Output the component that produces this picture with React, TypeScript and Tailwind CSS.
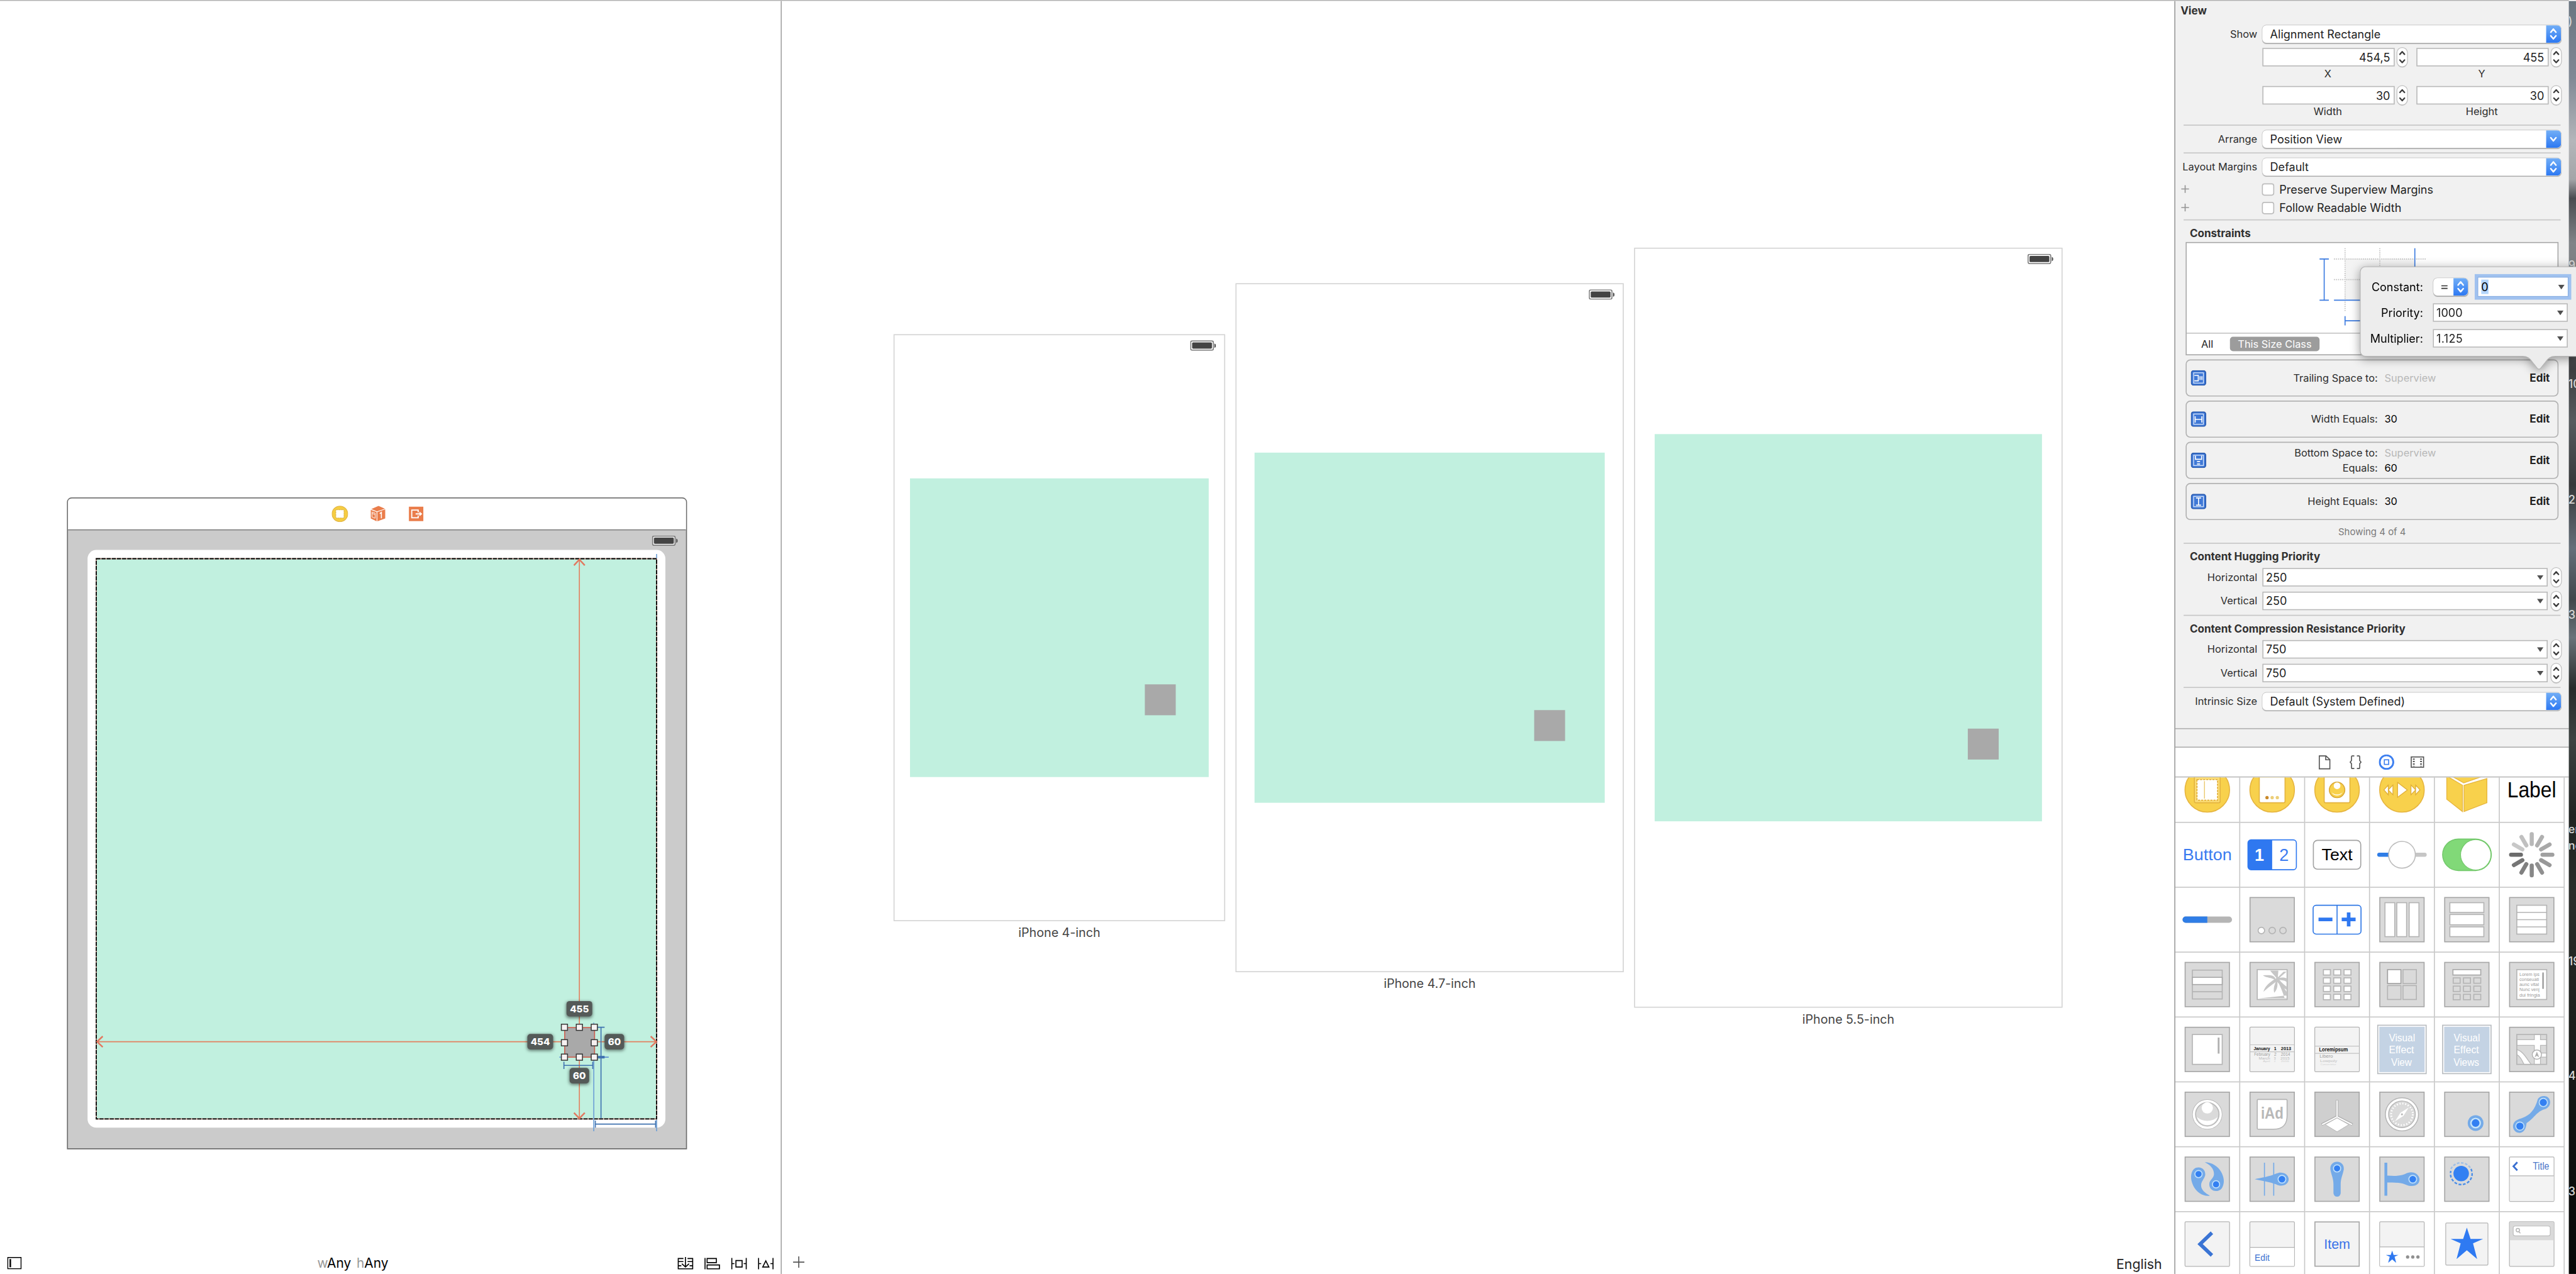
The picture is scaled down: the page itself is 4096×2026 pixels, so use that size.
import React from "react";

/* ---------- shared form controls ---------- */

function Chevrons({ single = false }: { single?: boolean }) {
  return (
    <svg viewBox="0 0 28 34" className="h-full w-[28px]" fill="none" stroke="#fff" strokeWidth="3" strokeLinecap="round" strokeLinejoin="round">
      {single ? (
        <path d="M9 14.5l5 6 5-6" />
      ) : (
        <>
          <path d="M9 13.5l5-6 5 6" />
          <path d="M9 20.5l5 6 5-6" />
        </>
      )}
    </svg>
  );
}

function Select({ text, single = false }: { text: string; single?: boolean }) {
  return (
    <div className="flex h-[34px] w-[580px] items-stretch overflow-hidden rounded-[8px] bg-white shadow-[0_0_0_1px_#c9c9c9,0_2px_1px_#a8a8a8]">
      <div className="flex flex-1 items-center pl-[15px] text-[22px] text-[#222]">{text}</div>
      <div className="w-[29px] bg-gradient-to-b from-[#72aef6] to-[#2c78f2]">
        <Chevrons single={single} />
      </div>
    </div>
  );
}

function Stepper() {
  return (
    <div className="h-[36px] w-[19px] rounded-full bg-white shadow-[0_0_0_1.5px_#c0c0c0,0_2px_1px_#b0b0b0]">
      <svg viewBox="0 0 19 36" className="h-full w-full" fill="none" stroke="#3c3c3c" strokeWidth="2.8" strokeLinecap="round" strokeLinejoin="round">
        <path d="M5 12.5l4.5-5 4.5 5" />
        <path d="M5 23.5l4.5 5 4.5-5" />
      </svg>
    </div>
  );
}

function Triangle() {
  return (
    <svg viewBox="0 0 14 10" className="h-[9px] w-[13px]">
      <path d="M0 0h14l-7 10z" fill="#505050" />
    </svg>
  );
}

function Row({ label, className = "", children }: { label: string; className?: string; children: React.ReactNode }) {
  return (
    <div className={"flex items-center gap-[10px] " + className}>
      <div className="w-[159px] whitespace-nowrap text-right text-[20px] text-[#2c2c2c]">{label}</div>
      {children}
    </div>
  );
}

function NumberPair({ a, b, la, lb, className }: { a: string; b: string; la: string; lb: string; className: string }) {
  return (
    <div className={"ml-[169px] flex w-[580px] justify-between " + className}>
      {[
        [a, la],
        [b, lb],
      ].map(([v, l]) => (
        <div key={l} className="flex w-[281px] flex-col">
          <div className="flex justify-between">
            <div className="flex h-[36px] w-[257px] items-center justify-end border-2 border-[#b9b9b9] bg-white pr-[7px] pt-[1px] text-[22px] text-[#222]">{v}</div>
            <Stepper />
          </div>
          <div className="mt-[2px] flex h-[24px] w-[254px] items-center justify-center text-[20px] text-[#2c2c2c]">{l}</div>
        </div>
      ))}
    </div>
  );
}

function PriorityField({ label, value, className }: { label: string; value: string; className: string }) {
  return (
    <Row label={label} className={className}>
      <div className="flex w-[580px] justify-between">
        <div className="flex h-[36px] w-[554px] items-center justify-between border-2 border-[#b9b9b9] bg-white pr-[6px] pl-[5px] text-[22px] text-[#222]">
          {value}
          <Triangle />
        </div>
        <Stepper />
      </div>
    </Row>
  );
}

function Divider({ className }: { className: string }) {
  return <div className={"ml-[16px] h-[2px] w-[732px] bg-[#c6c6c6] " + className} />;
}

function Heading({ children, className }: { children: string; className: string }) {
  return <div className={"ml-[28px] flex h-[24px] items-center text-[20.8px] font-bold text-[#303030] " + className}>{children}</div>;
}

function Check({ label, className }: { label: string; className: string }) {
  return (
    <div className={"flex h-[24px] items-center " + className}>
      <svg viewBox="0 0 16 16" className="mb-[2px] ml-[11px] h-[16px] w-[16px]" stroke="#959595" strokeWidth="2">
        <path d="M8 0.500v15M0.500 8h15" />
      </svg>
      <div className="ml-[141px] h-[24px] w-[24px] rounded-[5px] border-2 border-[#bdbdbd] bg-white" />
      <div className="ml-[10px] text-[22px] text-[#222]">{label}</div>
    </div>
  );
}

/* ---------- constraints ---------- */

const constraintIcons: Record<string, React.ReactNode> = {
  trailing: <path d="M7 10h7.500v10.500H7M18 11.500v7.500M21.500 11.500v7.500" />,
  width: <path d="M8.500 9.500v12M21.500 9.500v12M8.500 15.500h13" />,
  bottom: <path d="M9 6v7h12V6M12 17.500h6M12 22h6" />,
  height: <path d="M10 8h10M10 22h10M15 8v14" />,
};

function ConstraintRow({ icon, lines }: { icon: string; lines: [string, string, boolean][] }) {
  return (
    <div className="flex h-[72px] w-[724px] items-center rounded-[9px] border-2 border-[#b2b2b2] bg-[#f1f1f1]">
      <svg viewBox="0 0 30 30" className="ml-[8px] h-[30px] w-[30px]" fill="none" stroke="#fff" strokeWidth="2">
        <rect x="1" y="1" width="28" height="28" rx="4.500" fill="#3f78d6" stroke="#2c5db0" />
        <rect x="5.500" y="5" width="19" height="20" stroke="#dbe8fb" strokeWidth="1.600" />
        {constraintIcons[icon]}
      </svg>
      <div className="flex flex-col">
        {lines.map(([l, v, dim]) => (
          <div key={l} className="flex h-[30px] items-center text-[20px]">
            <div className="w-[333px] text-right text-[#2c2c2c]">{l}</div>
            <div className={"ml-[13px] w-[140px] " + (dim ? "text-[#b8b8b8]" : "text-black")}>{v}</div>
          </div>
        ))}
      </div>
      <div className="mr-[15px] ml-auto text-[20.8px] font-bold text-[#222]">Edit</div>
    </div>
  );
}

function ConstraintsDiagram() {
  return (
    <div className="mt-[5px] ml-[20px] flex h-[220px] w-[724px] flex-col border-2 border-[#a8a8a8] bg-white">
      <svg viewBox="4246 472 720 174" className="h-[174px] w-[720px]" fill="none">
        <rect x="4554" y="503" width="135" height="80" fill="#f3f3f3" />
        <path d="M4553.500 482V604M4621 482V604M4532 503H4710M4532 543H4710" stroke="#bdbdbd" strokeWidth="2" strokeDasharray="2 2" />
        <path d="M4513 503V583M4504 503H4522M4504 583H4522M4689 482V604M4532 583H4710M4553.500 614V632M4553.500 623H4689" stroke="#3a7ae0" strokeWidth="2" />
      </svg>
      <div className="flex flex-1 items-center border-t-2 border-[#c4c4c4] text-[20px]">
        <div className="ml-[28px] w-[24px] text-[#222]">All</div>
        <div className="ml-[32px] flex h-[28px] w-[174px] items-center justify-center rounded-[6px] bg-[#9c9c9c] whitespace-nowrap text-white">This Size Class</div>
      </div>
    </div>
  );
}

function Popover() {
  const field = "flex h-[36px] w-[262px] items-center justify-between border-2 border-[#b9b9b9] bg-white pl-[5px] pr-[6px] text-[22px] text-[#222]";
  return (
    <div className="absolute top-[517px] left-[4582px] h-[202px] w-[420px] drop-shadow-[0_4px_10px_rgba(0,0,0,0.4)]">
      <svg viewBox="0 0 420 202" className="absolute inset-0 h-full w-full">
        <path d="M430 1H11a10 10 0 0 0-10 10V165a10 10 0 0 0 10 10H316C328 175 331 181 335 186L345 198.500Q348 201 351 198.500L361 186C365 181 368 175 380 175H430Z" fill="#ededed" stroke="#b4b4b4" strokeWidth="1.500" />
      </svg>
      <div className="relative flex flex-col gap-[14px] pt-[22px]">
        <div className="flex h-[36px] items-center">
          <div className="w-[123px] text-right text-[22px] text-black">Constant:</div>
          <div className="ml-[20px] flex h-[34px] w-[67px] overflow-hidden rounded-[8px] bg-white shadow-[0_0_0_1px_#c4c4c4,0_2px_1px_#a8a8a8]">
            <svg viewBox="0 0 39 34" className="h-full w-[39px]" stroke="#333" strokeWidth="2">
              <path d="M15.500 15H27.500M15.500 20H27.500" />
            </svg>
            <div className="w-[28px] bg-gradient-to-b from-[#72aef6] to-[#2c78f2]">
              <Chevrons />
            </div>
          </div>
          <div className="ml-[20px] flex h-[36px] w-[174px] items-center justify-between bg-white px-[6px] text-[22px] text-black shadow-[0_0_0_7px_#a0c1ef] ring-1 ring-[#7ba4dc]">
            <span className="bg-[#b3d5fc] leading-[28px]">0</span>
            <Triangle />
          </div>
        </div>
        <div className="flex items-center">
          <div className="w-[123px] text-right text-[22px] text-black">Priority:</div>
          <div className="ml-[19px] flex">
            <div className={field}>
              1000
              <Triangle />
            </div>
          </div>
        </div>
        <div className="flex items-center">
          <div className="w-[123px] text-right text-[22px] text-black">Multiplier:</div>
          <div className="ml-[19px] flex">
            <div className={field}>
              <span className="tracking-[0.4px]">1.125</span>
              <Triangle />
            </div>
          </div>
        </div>
      </div>
    </div>
  );
}

/* ---------- object library ---------- */

const Box = ({ fill = "#dadada" }: { fill?: string }) => <rect x="-43" y="-43" width="86" height="86" fill={fill} stroke="#a6a6a6" strokeWidth="2" />;
const LightBox = () => <rect x="-43.300" y="-43.300" width="86.600" height="86.600" rx="2" fill="#f3f3f3" stroke="#b4b4b4" strokeWidth="1.500" />;
const Disc = () => <circle r="43.200" fill="#f8d14c" stroke="#e6b53f" strokeWidth="2" />;
const sans = "Liberation Sans, Arial, sans-serif";

function R({ x, y, x2, y2, fill = "#fff", stroke = "#b4b4b4", sw = 2, rx = 0 }: { x: number; y: number; x2: number; y2: number; fill?: string; stroke?: string; sw?: number; rx?: number }) {
  return <rect x={x} y={y} width={x2 - x} height={y2 - y} fill={fill} stroke={stroke} strokeWidth={sw} rx={rx} />;
}

function T({ x = 0, y, s, fill, w = "400", anchor = "middle", len, children }: { x?: number; y: number; s: number; fill: string; w?: string; anchor?: "start" | "middle" | "end"; len?: number; children: string }) {
  return (
    <text x={x} y={y} fontSize={s} fill={fill} fontWeight={w} textAnchor={anchor} fontFamily={sans} textLength={len} lengthAdjust="spacingAndGlyphs">
      {children}
    </text>
  );
}

function Pin({ x, y, r = 10 }: { x: number; y: number; r?: number }) {
  return <circle cx={x} cy={y} r={r - 2} fill="#3380f2" stroke="#bfe0fb" strokeWidth="2" />;
}

const spokes = ["#b8b8b8", "#b0b0b0", "#a8a8a8", "#a0a0a0", "#989898", "#909090", "#888", "#808080", "#767676", "#6c6c6c", "#c8c8c8", "#c0c0c0"];
const keyX = [-26.5, -6.5, 13.5];
const keyY = [-29, -13, 3, 19];
const star = "M0-32L7.200-9.900H31.500L12-1.500 20 29 0 12-20 29-12-1.500-31.500-9.900H-7.200Z";

const library: React.ReactNode[] = [
  // controllers
  <>
    <Disc />
    <R x={-25} y={-34} x2={25} y2={25} rx={3} fill="#fbdc74" stroke="#e3b440" />
    <R x={-20} y={-20} x2={20} y2={20} stroke="none" />
    <rect x="-20" y="-20" width="40" height="40" fill="none" stroke="#dfa92f" strokeWidth="2" strokeDasharray="4 2" />
    <path d="M-5.500-17V17" stroke="#e9c15a" strokeWidth="1.500" />
  </>,
  <>
    <Disc />
    <R x={-25} y={-34} x2={25} y2={25} rx={3} stroke="#e3b440" />
    <circle cx="-10" cy="15" r="3.200" fill="#c98a2b" />
    <circle cx="0" cy="15" r="3.200" fill="#ecce78" />
    <circle cx="10" cy="15" r="3.200" fill="#ecce78" />
  </>,
  <>
    <Disc />
    <R x={-25} y={-34} x2={25} y2={25} rx={3} stroke="#e3b440" />
    <circle r="15" fill="#f8d14c" stroke="#dba937" strokeWidth="2" />
    <circle cy="-8" r="6.500" fill="#fff" />
    <path d="M-11 3.500A12 12 0 0 0 11 3.500 12 9 0 0 1-11 3.500Z" fill="#fff" />
  </>,
  <>
    <Disc />
    <path d="M-8.500-14.500L10.500 0-8.500 14.500ZM-26.500 0L-17.500-9.500V9.500ZM-35 0L-26.500-9.500V9.500ZM26.500 0L17.500-9.500V9.500ZM35 0L26.500-9.500V9.500Z" fill="#fff" stroke="#dfae3a" strokeWidth="1.600" />
  </>,
  <g fill="#f8d14c" stroke="#e6b53f" strokeWidth="1.600">
    <path d="M-35-30L-6-13.500 38-29 5-45Z" />
    <path d="M-39-27L-8.500-9V42L-39 18Z" />
    <path d="M-5.500-9L39-22V25L-5.500 42Z" />
  </g>,
  <T y={15} s={42} fill="#000" len={95}>Label</T>,
  // controls
  <T y={11} s={32} fill="#3b7bf0" len={95}>Button</T>,
  <>
    <R x={-47} y={-29} x2={47} y2={29} rx={6} stroke="#2f78f0" />
    <path d="M0-29V29H-41a6 6 0 0 1-6-6V-23a6 6 0 0 1 6-6Z" fill="#2f78f0" />
    <T x={-25} y={11.5} s={33} fill="#fff" w="700">1</T>
    <T x={23} y={11.5} s={33} fill="#3b7bf0">2</T>
  </>,
  <>
    <R x={-46} y={-28} x2={46} y2={28} rx={8} stroke="#a2a2a2" />
    <T y={11} s={32} fill="#000" len={60}>Text</T>
  </>,
  <>
    <rect x="-48" y="-4" width="48" height="8" rx="4" fill="#2f7de6" />
    <rect x="0" y="-4" width="48" height="8" rx="4" fill="#c6c6c6" />
    <circle r="26" fill="#fff" stroke="#bdbdbd" strokeWidth="2" />
  </>,
  <>
    <R x={-47} y={-30.5} x2={47.5} y2={30.5} rx={30.5} fill="#81d978" stroke="#74c96c" />
    <circle cx="17.300" r="29.500" fill="#fff" stroke="#74c96c" strokeWidth="1.500" />
  </>,
  <g strokeWidth="8" strokeLinecap="round">
    {spokes.map((c, i) => (
      <path key={i} d="M0-21V-40" stroke={c} transform={`rotate(${i * 30})`} />
    ))}
  </g>,
  // indicators and stacks
  <>
    <rect x="-48" y="-6" width="96" height="12" rx="6" fill="#b5b5b5" />
    <path d="M0-6V6H-42a6 6 0 0 1 0-12Z" fill="#2f7de6" />
  </>,
  <>
    <Box />
    <g stroke="#b4b4b4" strokeWidth="2" fill="none">
      <circle cx="-21" cy="21" r="6.300" fill="#fff" />
      <circle cx="0" cy="21" r="6.300" />
      <circle cx="21" cy="21" r="6.300" />
    </g>
  </>,
  <>
    <R x={-46.5} y={-28} x2={46.5} y2={28} rx={6} stroke="#2f78e6" />
    <path d="M0-28V28" stroke="#2f78e6" strokeWidth="2" />
    <path d="M-36-.5H-9M9-.5H36M22.500-14V13" stroke="#2f78f0" strokeWidth="7" />
  </>,
  <>
    <Box />
    <R x={-33} y={-33} x2={-14} y2={33} />
    <R x={-10} y={-33} x2={9} y2={33} />
    <R x={14} y={-33} x2={33} y2={33} />
  </>,
  <>
    <Box />
    <R x={-33} y={-33} x2={33} y2={-14} />
    <R x={-33} y={-10} x2={33} y2={10} />
    <R x={-33} y={14} x2={33} y2={33} />
  </>,
  <>
    <Box />
    <R x={-29} y={-28} x2={29} y2={28} />
    <path d="M-29-14H29M-29 0H29M-29 14H29" stroke="#b4b4b4" strokeWidth="2" />
  </>,
  // data views
  <>
    <Box />
    <R x={-29} y={-28} x2={29} y2={28} fill="none" />
    <path d="M-29 14H29" stroke="#b4b4b4" strokeWidth="2" />
    <R x={-29} y={-14} x2={29} y2={0} stroke="#a8a8a8" />
  </>,
  <>
    <Box />
    <R x={-29} y={-29} x2={29} y2={29} />
    <path d="M-26 27L28 21V27ZM7-11C2-20-6-18-18-18C-14-14-4-14 4-10C-4-4-14 2-17 14C-10 8 0 0 7-5C4 2 2 8 4 16C10 10 11 2 10-5C14 0 20 6 28 10V4C22 0 17-5 14-9C20-8 24-8 28-5V-12C24-14 18-14 14-13L28-25H22L11-14 12-27H-4C0-22 4-18 8-13ZM12-4C17 6 21 16 24 26H28V14C23 6 18 0 14-6Z" fill="#c6c6c6" />
  </>,
  <>
    <Box />
    {keyY.map((y) => keyX.map((x) => <R key={x + ":" + y} x={x} y={y} x2={x + 13.5} y2={y + 10.5} />))}
  </>,
  <>
    <Box />
    <R x={2} y={-29} x2={28} y2={-2} fill="none" />
    <R x={-28} y={2} x2={-2} y2={29} fill="none" />
    <R x={2} y={2} x2={28} y2={29} fill="none" />
    <R x={-28} y={-29} x2={-2} y2={-2} stroke="#a0a0a0" />
  </>,
  <>
    <Box />
    <R x={-27} y={-29} x2={27} y2={-18.5} stroke="#a8a8a8" />
    {keyY.slice(1).map((y) => keyX.map((x) => <R key={x + ":" + y} x={x} y={y} x2={x + 13.5} y2={y + 10.5} fill="none" />))}
  </>,
  <>
    <Box />
    <R x={-29} y={-29} x2={29} y2={29} />
    <T x={-24} y={-17} s={9} fill="#9a9a9a" anchor="start" len={39}>Lorem ips</T>
    <T x={-24} y={-7} s={9} fill="#9a9a9a" anchor="start" len={38}>conseuati</T>
    <T x={-24} y={3} s={9} fill="#9a9a9a" anchor="start" len={38}>aunc vital</T>
    <T x={-24} y={13} s={9} fill="#9a9a9a" anchor="start" len={39}>Nunc venj</T>
    <T x={-24} y={23} s={9} fill="#9a9a9a" anchor="start" len={40}>dui fringia</T>
    <path d="M22-22V7" stroke="#a8a8a8" strokeWidth="3.500" strokeLinecap="round" />
  </>,
  // scroll, pickers, effects, map
  <>
    <Box />
    <R x={-29} y={-29} x2={29} y2={29} />
    <path d="M22-23V8" stroke="#b0b0b0" strokeWidth="3.500" />
  </>,
  <>
    <LightBox />
    <path d="M-43-9H43M-43 4.500H43" stroke="#c4c4c4" strokeWidth="1.500" />
    <T x={-36} y={1} s={8.5} fill="#111" w="700" anchor="start" len={32}>January</T>
    <T x={6} y={1} s={8.5} fill="#111" w="700">1</T>
    <T x={37} y={1} s={8.5} fill="#111" w="700" anchor="end" len={20}>2013</T>
    <T x={-4} y={12} s={8} fill="#9c9c9c" anchor="end" len={31}>February</T>
    <T x={6} y={12} s={8} fill="#9c9c9c">2</T>
    <T x={35} y={12} s={8} fill="#9c9c9c" anchor="end" len={18}>2014</T>
    <T x={-4} y={20} s={7} fill="#bcbcbc" anchor="end" len={22}>March</T>
    <T x={5} y={20} s={7} fill="#bcbcbc">3</T>
    <T x={34} y={20} s={7} fill="#bcbcbc" anchor="end" len={18}>2015</T>
    <T x={-4} y={25} s={4.5} fill="#cfcfcf" anchor="end" len={14}>April</T>
    <T x={5} y={25} s={4.5} fill="#cfcfcf">4</T>
    <T x={33} y={25} s={4.5} fill="#cfcfcf" anchor="end" len={16}>2016</T>
  </>,
  <>
    <LightBox />
    <path d="M-43-6.500H43M-43 7.500H43" stroke="#c4c4c4" strokeWidth="1.500" />
    <T x={-35} y={4} s={10} fill="#111" w="700" anchor="start" len={56}>Loremipsum</T>
    <T x={-34} y={16.5} s={9} fill="#9c9c9c" anchor="start" len={26}>Libero</T>
    <T x={-33} y={24.5} s={7.5} fill="#c0c0c0" anchor="start" len={33}>Lowpoly</T>
    <T x={-32} y={30.5} s={4.5} fill="#d2d2d2" anchor="start" len={30}>Consectetur</T>
  </>,
  <>
    <R x={-47} y={-47} x2={47} y2={47} stroke="#b8bcc0" />
    <R x={-44} y={-44} x2={44} y2={44} fill="#c4d3e4" stroke="none" />
    <T y={-16} s={21} fill="#fff" len={51}>Visual</T>
    <T x={-1} y={8} s={21} fill="#fff" len={49}>Effect</T>
    <T x={-1} y={32} s={21} fill="#fff" len={40}>View</T>
  </>,
  <>
    <R x={-47} y={-47} x2={47} y2={47} stroke="#b8bcc0" />
    <R x={-44} y={-44} x2={44} y2={44} fill="#c4d3e4" stroke="none" />
    <T y={-16} s={21} fill="#fff" len={51}>Visual</T>
    <T x={-1} y={8} s={21} fill="#fff" len={49}>Effect</T>
    <T x={-1} y={32} s={21} fill="#fff" len={50}>Views</T>
  </>,
  <>
    <Box />
    <g fill="#fff" stroke="#b8b8b8" strokeWidth="1.600">
      <path d="M-29-19H5V-29H17V-19H29V-8H17V7H29V15H17V29H5V-8H-29Z" />
      <path d="M-29 0C-16 4-10 18-1 29H-15C-20 18-24 12-29 10Z" />
    </g>
    <rect x="-29" y="-29" width="58" height="58" fill="none" stroke="#b4b4b4" strokeWidth="2" />
    <circle cx="10" cy="10" r="9" fill="#fff" stroke="#b0b0b0" strokeWidth="1.800" />
    <path d="M10 4L14.500 15.500 10 12.500 5.500 15.500Z" fill="#b0b0b0" />
  </>,
  // kits
  <>
    <Box />
    <circle r="25.500" fill="#dadada" stroke="#b8b8b8" strokeWidth="7.500" />
    <circle r="26" fill="none" stroke="#fff" strokeWidth="4.500" />
    <circle cy="-12.500" r="11" fill="#fff" />
    <path d="M-20 5A20.500 20.500 0 0 0 20 5 24 17 0 0 1-20 5Z" fill="#fff" />
  </>,
  <>
    <Box />
    <path d="M-27-29H27Q29-29 29-27V2C29 20 21 29 2 29H-27Q-29 29-29 27V-27Q-29-29-27-29Z" fill="#fff" stroke="#b4b4b4" strokeWidth="2" />
    <T y={9} s={31} fill="#b8b8b8" w="700" len={44}>iAd</T>
  </>,
  <>
    <Box fill="#cfcfcf" />
    <path d="M0-28V6M-1 5L-30 20M1 5L30 20" stroke="#b2b2b2" strokeWidth="5" />
    <path d="M0-27V6M0 5L-29 20M0 5L29 20" stroke="#fff" strokeWidth="2.400" />
    <path d="M0 7L23 20 0 34-23 20Z" fill="#fff" stroke="#b4b4b4" strokeWidth="1.200" />
  </>,
  <>
    <Box />
    <circle r="29" fill="none" stroke="#b4b4b4" strokeWidth="8" />
    <circle r="29" fill="none" stroke="#fff" strokeWidth="4.500" />
    <circle r="21" fill="none" stroke="#fff" strokeWidth="3.500" strokeDasharray="2.200 3.300" />
    <path d="M16-16L3.500 3.500-16 16-3.500-3.500Z" fill="#fff" stroke="#dadada" strokeWidth="1.500" />
    <circle r="2" fill="#b8b8b8" />
  </>,
  <>
    <Box />
    <circle cx="17" cy="17" r="15.300" fill="#74aae8" />
    <circle cx="17" cy="17" r="9" fill="#3380f2" stroke="#c5e4fb" strokeWidth="3" />
  </>,
  <>
    <Box />
    <path d="M12-30C18-38 32-37 35-28C38-19 32-11 22-9C8-3 4 8-10 17C-11 24-12 33-22 36C-32 37-38 28-36 20C-33 11-26 10-18 7C-4 2 6-8 12-30Z" fill="#74aae8" />
    <Pin x={22.5} y={-23} />
    <Pin x={-23} y={23} />
  </>,
  // dynamics
  <>
    <Box />
    <path d="M-17-23C-9-23-3-17-4-8C-6 0-12 4-12 12C-12 21-4 27 5 32C-8 34-21 25-27 13C-31 5-33-5-30-13C-28-19-24-23-17-23Z" fill="#74aae8" />
    <path d="M17 23C9 23 3 17 4 8C5 1 13-2 13-10C13-20 6-28-5-33C9-33 21-25 27-14C32-5 34 5 30 14C28 19 24 23 17 23Z" fill="#74aae8" />
    <Pin x={-17} y={-10} r={9} />
    <Pin x={17} y={10} r={9} />
  </>,
  <>
    <Box />
    <path d="M-15-32V32M3-32V32" stroke="#74aae8" strokeWidth="2" />
    <path d="M-34 0C-20-3-6-5 8-11C18-16 32-11 32 0C32 11 18 16 8 10C-6 5-20 3-34 0Z" fill="#74aae8" />
    <Pin x={19} y={0} r={9.5} />
  </>,
  <>
    <Box />
    <path d="M0-34C9-34 14-27 13-19C11-8 7-2 7 10V27A7 7 0 0 1-7 27V10C-7-2-11-8-13-19C-14-27-9-34 0-34Z" fill="#74aae8" />
    <Pin x={0} y={-21} r={9} />
  </>,
  <>
    <Box />
    <path d="M-34-32H-28.500V-7C-14-6-4-6 6-10C14-15 22-14 27-11C35-6 36 3 31 9C25 15 14 14 6 10C-4 6-14 7-28.500 6.500V32H-34Z" fill="#74aae8" />
    <Pin x={21} y={0} r={9.5} />
  </>,
  <>
    <Box />
    <circle cx="-11" cy="-11" r="15" fill="#3380f2" />
    <path d="M-31-20A22 22 0 0 1 8-20" fill="none" stroke="#9fbfe6" strokeWidth="3" strokeDasharray="5 3" />
    <path d="M8-20A21 21 0 1 1-31-16" fill="none" stroke="#4a8ee8" strokeWidth="3" strokeDasharray="5.500 3" />
  </>,
  <>
    <R x={-43.3} y={-43.3} x2={43.3} y2={43.3} rx={2} sw={1.5} />
    <rect x="-42.500" y="-7" width="85" height="49.500" fill="#f3f3f3" />
    <path d="M-43-6.500H43" stroke="#b4b4b4" strokeWidth="1.500" />
    <path d="M-28-33L-35.500-25-28-17" fill="none" stroke="#3a6fd0" strokeWidth="3.500" />
    <T x={34} y={-19} s={20} fill="#4a76c8" anchor="end" len={32}>Title</T>
  </>,
  // bars
  <>
    <LightBox />
    <path d="M9-22L-14 0 9 22" fill="none" stroke="#3a74d4" strokeWidth="7" />
  </>,
  <>
    <LightBox />
    <rect x="-42.500" y="7" width="85" height="35.500" fill="#fff" />
    <path d="M-43 6.500H43" stroke="#b4b4b4" strokeWidth="1.500" />
    <T x={-34} y={32} s={19} fill="#3a6fd0" anchor="start" len={29}>Edit</T>
  </>,
  <>
    <Box fill="#f3f3f3" />
    <T y={9} s={27} fill="#3b74e8" len={51}>Item</T>
  </>,
  <>
    <LightBox />
    <rect x="-42.500" y="6" width="85" height="36.500" fill="#fff" />
    <path d="M-43 5.500H43" stroke="#b4b4b4" strokeWidth="1.500" />
    <path d={star} transform="translate(-19 25) scale(.39)" fill="#2f78f0" />
    <circle cx="11" cy="25" r="3.200" fill="#909090" />
    <circle cx="21" cy="25" r="3.200" fill="#909090" />
    <circle cx="31" cy="25" r="3.200" fill="#909090" />
  </>,
  <>
    <R x={-41} y={-41} x2={41} y2={41} rx={2} fill="#f3f3f3" stroke="#b4b4b4" sw={1.5} />
    <path d={star} fill="#2f7af2" />
  </>,
  <>
    <LightBox />
    <rect x="-42.500" y="-42.500" width="85" height="35" fill="#dadada" />
    <R x={-36} y={-35} x2={36} y2={-16} rx={4} stroke="#bdbdbd" sw={1.5} />
    <circle cx="-27" cy="-27" r="3.300" fill="none" stroke="#b4b4b4" strokeWidth="1.800" />
    <path d="M-25-24L-22-21" stroke="#b4b4b4" strokeWidth="1.800" />
  </>,
];

function Library() {
  return (
    <div className="h-[964px] w-[764px] overflow-hidden bg-white">
      <div className="-mt-[38px] grid w-[756px] auto-rows-[126px] grid-cols-6">
        {library.map((icon, i) => (
          <div key={i} className="border-r-2 border-b-2 border-[#c8c8c8]">
            <svg viewBox="-62 -62 124 124" className="h-[124px] w-[124px]">
              {icon}
            </svg>
          </div>
        ))}
      </div>
    </div>
  );
}

/* ---------- inspector ---------- */

function Inspector() {
  return (
    <div className="flex w-[766px] flex-col border-l-2 border-[#9c9c9c] bg-[#f1f1f1]">
      <div className="ml-[10px] flex h-[38px] items-center text-[20.8px] font-bold text-[#303030]">View</div>
      <Row label="Show" className="mt-[9px]">
        <Select text="Alignment Rectangle" />
      </Row>
      <NumberPair a="454,5" b="455" la="X" lb="Y" className="mt-[10px]" />
      <NumberPair a="30" b="30" la="Width" lb="Height" className="mt-[12px]" />
      <Divider className="mt-[13px]" />
      <Row label="Arrange" className="mt-[9px]">
        <Select text="Position View" single />
      </Row>
      <Divider className="mt-[9px]" />
      <Row label="Layout Margins" className="mt-[9px]">
        <Select text="Default" />
      </Row>
      <Check label="Preserve Superview Margins" className="mt-[15px]" />
      <Check label="Follow Readable Width" className="mt-[12px]" />
      <Divider className="mt-[10px]" />
      <Heading className="mt-[13px]">Constraints</Heading>
      <ConstraintsDiagram />
      <div className="mt-[8px] ml-[20px] flex flex-col gap-[8px]">
        <ConstraintRow icon="trailing" lines={[["Trailing Space to:", "Superview", true]]} />
        <ConstraintRow icon="width" lines={[["Width Equals:", "30", false]]} />
        <ConstraintRow
          icon="bottom"
          lines={[
            ["Bottom Space to:", "Superview", true],
            ["Equals:", "60", false],
          ]}
        />
        <ConstraintRow icon="height" lines={[["Height Equals:", "30", false]]} />
      </div>
      <div className="mt-[10px] flex h-[24px] items-center justify-center text-[18.300px] text-[#7a7a7a]">Showing 4 of 4</div>
      <Divider className="mt-[10px]" />
      <Heading className="mt-[13px]">Content Hugging Priority</Heading>
      <PriorityField label="Horizontal" value="250" className="mt-[10px]" />
      <PriorityField label="Vertical" value="250" className="mt-[10px]" />
      <Divider className="mt-[9px]" />
      <Heading className="mt-[13px]">Content Compression Resistance Priority</Heading>
      <PriorityField label="Horizontal" value="750" className="mt-[10px]" />
      <PriorityField label="Vertical" value="750" className="mt-[10px]" />
      <Divider className="mt-[9px]" />
      <Row label="Intrinsic Size" className="mt-[9px]">
        <Select text="Default (System Defined)" />
      </Row>
      <div className="mt-[35px] h-[38px] border-y-2 border-[#b0b0b0]" />
      <div className="flex h-[58px] items-center justify-center gap-[30px] border-b-2 border-[#b0b0b0] bg-white pr-[4px]">
        <svg viewBox="0 0 30 30" className="h-[30px] w-[30px]" fill="none" stroke="#555" strokeWidth="2">
          <path d="M4.500 3H17.500L25 10V28H4.500Z" />
          <path d="M17 3V10.500H25" />
        </svg>
        <svg viewBox="0 0 30 30" className="h-[30px] w-[30px]" fill="none" stroke="#555" strokeWidth="2">
          <path d="M12.500 3H8.500Q7 3 7 5V12L4.500 15 7 18V25Q7 27.500 8.500 27.500H12.500" />
          <path d="M17.500 3H21.500Q23 3 23 5V12L25.500 15 23 18V25Q23 27.500 21.500 27.500H17.500" />
        </svg>
        <svg viewBox="0 0 30 30" className="h-[30px] w-[30px]" fill="none" stroke="#3d7ff0">
          <circle cx="15" cy="15" r="13.200" strokeWidth="3.600" />
          <rect x="10.800" y="10.500" width="8.400" height="9" strokeWidth="2" />
        </svg>
        <svg viewBox="0 0 30 30" className="h-[30px] w-[30px]" fill="none" stroke="#555" strokeWidth="2">
          <rect x="3" y="5" width="24" height="20" />
          <path d="M8 8V23M22 8V23" strokeDasharray="2.500 2.200" strokeWidth="3.500" />
        </svg>
      </div>
      <Library />
    </div>
  );
}

/* ---------- canvas ---------- */

function Battery({ className = "" }: { className?: string }) {
  return (
    <svg viewBox="0 0 50 20" className={"h-[20px] w-[50px] " + className}>
      <rect x="1" y="1" width="44" height="18" rx="3" fill="#fff" fillOpacity=".5" stroke="#7a7a7a" strokeWidth="2" />
      <rect x="3.800" y="4" width="38.500" height="12" rx="2" fill="#444" />
      <path d="M47.200 6V14.500Q50 13.500 50 10.200 50 7 47.200 6Z" fill="#444" />
    </svg>
  );
}

function Device({ name, frame, view, square }: { name: string; frame: string; view: string; square: string }) {
  return (
    <div className="flex flex-col items-center">
      <div className={"relative flex items-center justify-center border-2 border-[#d4d4d4] bg-white " + frame}>
        <Battery className="absolute top-[10px] right-[16px]" />
        <div className={"relative bg-[#c1f0df] " + view}>
          <div className={"absolute bottom-[120px] h-[60px] w-[60px] bg-[#a9a9a9] " + square} />
        </div>
      </div>
      <div className="mt-[8px] flex h-[30px] items-center text-[24px] text-[#444]">{name}</div>
    </div>
  );
}

const handles = [
  [1096, 1995], [1125, 1995], [1154, 1995],
  [1096, 2025], [1154, 2025],
  [1096, 2053], [1125, 2053], [1154, 2053],
];

function Badge({ value, className }: { value: string; className: string }) {
  return (
    <div className={"absolute flex h-[30px] items-center justify-center rounded-[6px] bg-[#545a58] text-[18.500px] font-extrabold text-white shadow-[0_2px_6px_rgba(0,0,0,0.5)] " + className}>
      {value}
    </div>
  );
}

function Scene() {
  return (
    <div className="relative mt-[964px] ml-[130px] flex h-[1266px] w-[1204px] flex-col rounded-t-[9px] border-2 border-[#6b6b6b] bg-[#cbcbcb]">
      <div className="flex h-[62px] items-center justify-center gap-[42px] rounded-t-[7px] border-b-2 border-[#6b6b6b] bg-white pl-[3px]">
        <svg viewBox="-16 -16 32 32" className="h-[32px] w-[32px]">
          <circle r="15.200" fill="#f6cd42" stroke="#e3b748" strokeWidth="1.500" />
          <rect x="-8" y="-8" width="16" height="16" fill="#fff" stroke="#d7ab38" strokeWidth="1.500" strokeDasharray="2 1.200" />
        </svg>
        <svg viewBox="-16 -16 32 32" className="h-[32px] w-[32px]">
          <g fill="#ea7d4b">
            <path d="M-13-9.500L1-15.500 13.500-10-2-5Z" />
            <path d="M-14-8L-2.700-3.800V14.500L-14 9Z" />
            <path d="M-1.300-3.800L14-8.700V9L-1.300 14.500Z" />
          </g>
          <path d="M-11.500-3.500L-5.500-1.500V8.500L-11.500 6.200ZM-11.500-.8L-5.500 1.200" fill="none" stroke="#fff" strokeWidth="1.100" />
          <path d="M3.500-.500L6.500-3V8.500" fill="none" stroke="#fff" strokeWidth="2" />
        </svg>
        <svg viewBox="-16 -16 32 32" className="h-[32px] w-[32px]">
          <rect x="-14" y="-14" width="28" height="28" fill="#ea7d4b" />
          <path d="M4-3V-7.500H-8.500V7.500H4V3" fill="none" stroke="#fff" strokeWidth="2.200" />
          <path d="M-1 0H8" stroke="#fff" strokeWidth="2.200" />
          <path d="M6.500-4.500L12 0 6.500 4.500Z" fill="#fff" />
        </svg>
      </div>
      <Battery className="mt-[10px] mr-[16px] self-end" />
      <div className="mt-[8px] ml-[38px] flex h-[1122px] w-[1122px] items-center justify-center rounded-[17px] bg-white">
        <div className="h-[1090px] w-[1090px] bg-[#c1f0df]" />
      </div>
      <svg viewBox="132 968 1200 1262" className="absolute inset-0 h-[1262px] w-[1200px]" fill="none">
        <rect x="187" y="1085" width="1088" height="1088" stroke="#d99a92" strokeWidth="2" />
        <rect x="187" y="1085" width="1088" height="1088" stroke="#000" strokeWidth="2.200" strokeDasharray="8 2" />
        <path d="M1125 1087V2172M188 2023H1274" stroke="#e2805f" strokeWidth="2" />
        <path d="M1114.500 1098L1125 1086.500 1135.500 1098M1114.500 2161L1125 2172 1135.500 2161M199.500 2012.500L188.500 2023 199.500 2033.500M1263.500 2012.500L1274.500 2023 1263.500 2033.500" stroke="#e2785f" strokeWidth="3" />
        <path d="M1153 1986V2197M1275 1076V1084M1086 2053H1092" stroke="#6d9fd6" strokeWidth="2" />
        <path d="M1275 2175V2197" stroke="#6d9fd6" strokeWidth="2" />
        <path d="M1167 1995V2172M1160 1995H1174M1095 2069H1151M1095 2062V2076M1151 2062V2076M1156 2183H1273M1156 2176V2190M1273 2176V2190" stroke="#3f72b0" strokeWidth="2" />
        <path d="M1160 2053H1182" stroke="#5b8fd0" strokeWidth="2" />
        <path d="M1161 2053H1174" stroke="#3f72b0" strokeWidth="5" />
        <rect x="1096.500" y="1995.500" width="58" height="57.500" fill="#a9a9a9" stroke="#cf5f50" strokeWidth="2" />
        {handles.map(([x, y]) => (
          <rect key={x + ":" + y} x={x - 6} y={y - 6} width="12" height="12" fill="#f6f1f1" stroke="#333" strokeWidth="1.800" />
        ))}
      </svg>
      <Badge value="455" className="top-[976px] left-[968px] w-[50px]" />
      <Badge value="454" className="top-[1040px] left-[892px] w-[50px]" />
      <Badge value="60" className="top-[1040px] left-[1042px] w-[38px]" />
      <Badge value="60" className="top-[1106px] left-[974px] w-[38px]" />
    </div>
  );
}

function LeftPane() {
  return (
    <div className="flex w-[1516px] flex-col justify-between overflow-hidden bg-white">
      <Scene />
      <div className="flex h-[42px] items-center">
        <svg viewBox="0 0 28 24" className="ml-[14px] h-[24px] w-[28px]" fill="none" stroke="#000" strokeWidth="2">
          <rect x="1" y="1" width="26" height="22" />
          <path d="M6 4V20" strokeWidth="3" />
        </svg>
        <div className="ml-[574px] flex w-[138px] justify-between text-[25.500px] whitespace-nowrap text-black">
          <span>
            <span className="text-[#999]">w</span>Any
          </span>
          <span>
            <span className="text-[#999]">h</span>Any
          </span>
        </div>
        <div className="ml-[561px] flex gap-[20px]">
          <svg viewBox="0 0 32 26" className="h-[26px] w-[32px]" fill="none" stroke="#000" strokeWidth="2">
            <path d="M12 4H2V24H30V4H20M2 10H12M20 10H30M2 18H8M24 18H30" />
            <path d="M16 1V20M9 14L16 20.500 23 14" />
          </svg>
          <svg viewBox="0 0 32 26" className="h-[26px] w-[32px]" fill="none" stroke="#000" strokeWidth="2">
            <path d="M2 3V25M6 4H24V12H6ZM6 16.500H30V24H6Z" />
          </svg>
          <svg viewBox="0 0 32 26" className="h-[26px] w-[32px]" fill="none" stroke="#000" strokeWidth="2">
            <path d="M2 3V25M30 3V25M2 14H7M25 14H30M10 8H22V20.500H10Z" />
          </svg>
          <svg viewBox="0 0 32 26" className="h-[26px] w-[32px]" fill="none" stroke="#000" strokeWidth="2">
            <path d="M2 3V25M30 3V25M2 14H7M25 14H30M16 8.500L22 20.500H10Z" />
          </svg>
        </div>
      </div>
    </div>
  );
}

function PreviewPane() {
  return (
    <div className="flex flex-1 flex-col justify-between border-l-2 border-[#a2a2a2] bg-white">
      <div className="flex items-start gap-[20px] pl-[217px]">
        <div className="mt-[647px]">
          <Device name="iPhone 4-inch" frame="h-[1140px] w-[644px]" view="h-[580px] w-[580px]" square="right-[64px]" />
        </div>
        <div className="mt-[548px]">
          <Device name="iPhone 4.7-inch" frame="h-[1338px] w-[754px]" view="h-[680px] w-[680px]" square="right-[77px]" />
        </div>
        <div className="mt-[479px]">
          <Device name="iPhone 5.5-inch" frame="h-[1476px] w-[832px]" view="h-[752px] w-[752px]" square="right-[84px]" />
        </div>
      </div>
      <div className="flex h-[42px] items-center justify-between pr-[24px] pl-[22px]">
        <svg viewBox="0 0 22 22" className="mb-[4px] h-[22px] w-[22px]" stroke="#555" strokeWidth="2">
          <path d="M11 0V22M0 11H22" />
        </svg>
        <div className="mb-[-4px] text-[26px] text-[#222]">English</div>
      </div>
    </div>
  );
}

/* ---------- sliver of the desktop behind the window ---------- */

const desktopLabels = [
  { y: 41, text: ")" },
  { y: 515, text: "9" },
  { y: 745, text: "10" },
  { y: 970, text: "2" },
  { y: 1194, text: "3" },
  { y: 1610, text: "en" },
  { y: 1642, text: "ng" },
  { y: 1867, text: "19" },
  { y: 2089, text: "4" },
  { y: 2313, text: "3" },
];

function DesktopSliver() {
  return (
    <div className="relative w-[14px] overflow-hidden bg-[linear-gradient(to_bottom,#6a7581_0%,#808995_6%,#b4b6ba_11%,#a3a5a8_14%,#494c50_15.500%,#808488_19%,#77797b_24%,#3c3e41_29%,#565b5e_33%,#36383a_38%,#65707a_43%,#40474b_47%,#69737a_50%,#272b2a_54%,#3d4342_58%,#202422_64%,#2b2e2b_70%,#1d201d_80%,#121412_88%,#060706_100%)]">
      {desktopLabels.map(({ y, text }) => (
        <div key={y} className="absolute -left-[1px] -translate-y-1/2 text-[22px] leading-none font-medium text-[#d6d6d6]" style={{ top: y - 2 }}>
          {text}
        </div>
      ))}
    </div>
  );
}

export default function App() {
  return (
    <div className="h-screen w-screen overflow-hidden bg-white">
      <div className="relative flex h-[2474px] w-[5002px] origin-top-left scale-[0.81888] flex-col font-['Inter',sans-serif] leading-none">
        <div className="h-[2px] w-[4988px] bg-[#b0b0b0]" />
        <div className="flex h-[2472px]">
          <LeftPane />
          <PreviewPane />
          <Inspector />
          <DesktopSliver />
        </div>
        <Popover />
      </div>
    </div>
  );
}
